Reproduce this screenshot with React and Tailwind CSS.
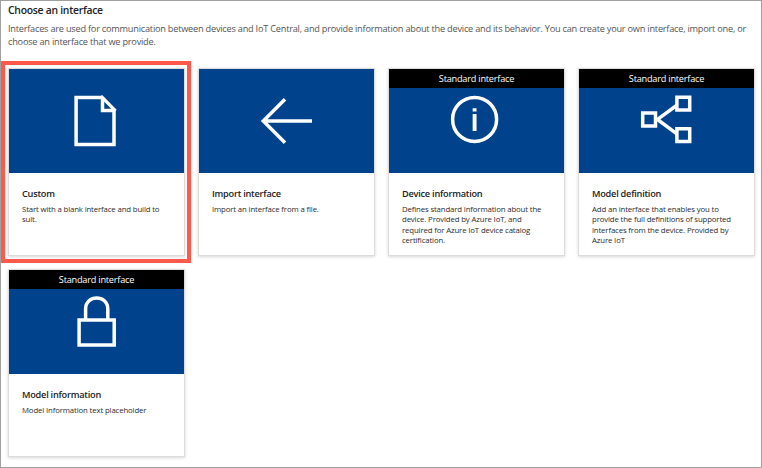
import React from "react";

const DocumentIcon = () => (
  <>
    <path d="M93.2 28.4H67.1V75.4H105V40.6" />
    <path d="M93.5 28.2V41.4H105.6" />
    <path d="M93 28.2L105.4 40.8" strokeWidth="3.2" strokeLinecap="square" />
  </>
);

const ArrowIcon = () => <path d="M113 52H64.5M86 30.2L64.3 52L86 73.8" />;

const InfoIcon = () => (
  <>
    <circle cx="85.6" cy="50.4" r="22" />
    <path d="M85.6 39.2V42.6M85.6 45V62" strokeWidth="3.9" />
  </>
);

const ShareIcon = () => (
  <>
    <path d="M63.7 44.1h12.8v12.8h-12.8zM97.9 28.3h12.8v12.8h-12.8zM97.9 59.8h12.8v12.8h-12.8z" />
    <path d="M97.5 36.5L78.5 50.4L97.5 64.6" />
  </>
);

const LockIcon = () => (
  <path d="M70.1 50.1H105.2V74.9H70.1zM76.6 50V39C76.6 24.3 98.8 24.3 98.8 39V50" />
);

const cards = [
  {
    title: "Custom",
    Icon: DocumentIcon,
    lines: ["Start with a blank interface and build to", "suit."],
  },
  { title: "Import interface", Icon: ArrowIcon, lines: ["Import an interface from a file."] },
  {
    title: "Device information",
    Icon: InfoIcon,
    standard: true,
    lines: [
      "Defines standard information about the",
      "device. Provided by Azure IoT, and",
      "required for Azure IoT device catalog",
      "certification.",
    ],
  },
  {
    title: "Model definition",
    Icon: ShareIcon,
    standard: true,
    lines: [
      "Add an interface that enables you to",
      "provide the full definitions of supported",
      "interfaces from the device. Provided by",
      "Azure IoT",
    ],
  },
  {
    title: "Model information",
    Icon: LockIcon,
    standard: true,
    lines: ["Model Information text placeholder"],
  },
];

function Card({ title, Icon, standard, lines, selected }) {
  return (
    <article className="relative h-[188px] w-[177px] border border-[#dcdcdc] bg-white shadow-[0_1px_3px_rgba(0,0,0,0.16)]">
      <div className="relative h-[104px] bg-[#00428c]">
        <svg
          className="block h-[104px] w-[175px]"
          viewBox="0 0 175 104"
          fill="none"
          stroke="white"
          strokeWidth="3.5"
        >
          <Icon />
        </svg>
        {standard && (
          <div className="absolute inset-x-0 top-0 h-[19px] bg-black text-center text-[9.2px] leading-[19px] tracking-[-0.23px] text-white">
            Standard interface
          </div>
        )}
      </div>
      <div className="px-[13px] pt-[15px] whitespace-nowrap">
        <h2 className="text-[9.2px] leading-[12px] font-semibold tracking-[-0.24px] text-[#222222]">
          {title}
        </h2>
        <div className="mt-[3.6px] text-[7.8px] leading-[10.6px] tracking-[-0.14px] text-[#2c2c2c]">
          {lines.map((line) => (
            <p key={line}>{line}</p>
          ))}
        </div>
      </div>
      {selected && (
        <div className="pointer-events-none absolute -top-[8px] -left-[8px] h-[202px] w-[190px] border-4 border-[#ff594b]" />
      )}
    </article>
  );
}

export default function App() {
  return (
    <main className="h-[468px] w-[762px] overflow-hidden border border-[#a0a0a0] bg-white pl-[7px] font-['Open_Sans',sans-serif]">
      <h1 className="mt-[2px] text-[10.4px] leading-[14px] font-semibold tracking-[-0.27px] text-[#222222]">
        Choose an interface
      </h1>
      <div className="mt-[5px] text-[9.2px] leading-[13.2px] tracking-[-0.226px] whitespace-nowrap text-[#555555]">
        <p>
          Interfaces are used for communication between devices and IoT Central, and provide
          information about the device and its behavior. You can create your own interface, import
          one, or
        </p>
        <p>choose an interface that we provide.</p>
      </div>
      <section className="mt-[19.6px] grid grid-cols-[repeat(4,177px)] gap-x-[13px] gap-y-[13px]">
        {cards.map((card, index) => (
          <Card key={card.title} {...card} selected={index === 0} />
        ))}
      </section>
    </main>
  );
}
